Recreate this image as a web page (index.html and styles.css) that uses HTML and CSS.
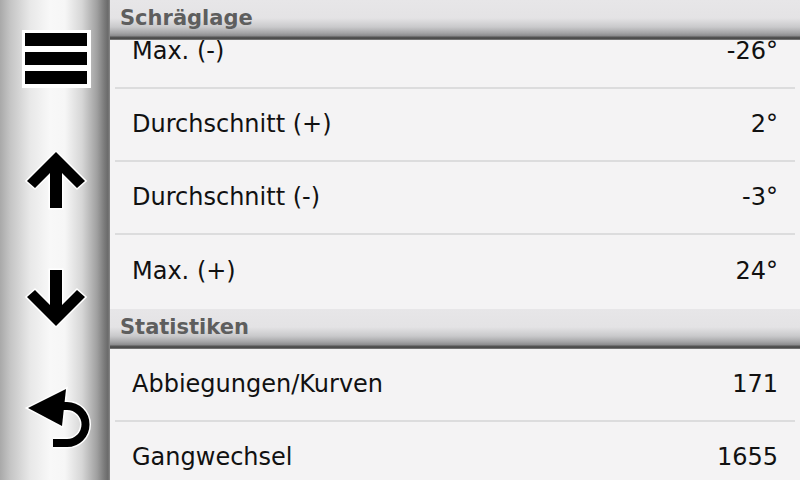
FILE: index.html
```html
<!DOCTYPE html>
<html lang="de">
  <head>
    <meta charset="UTF-8" />
    <meta name="viewport" content="width=device-width, initial-scale=1.0" />
    <title>Reisestatistik</title>

    <link rel="stylesheet" href="styles.css">
  </head>
  <body>
    <div class="screen">
      <div class="sidebar">
        <div class="side-btn" id="menu">
          <svg width="110" height="120" viewBox="0 0 110 120">
            <rect x="22" y="30" width="69" height="58" fill="#fff" />
            <rect x="25" y="33" width="62" height="13" fill="#000" />
            <rect x="25" y="52" width="62" height="13" fill="#000" />
            <rect x="25" y="71" width="62" height="13" fill="#000" />
          </svg>
        </div>

        <div class="side-btn" id="up">
          <svg width="110" height="120" viewBox="0 0 110 120">
            <polygon class="icon" points="56,32 85,61 77,68 62,53 62,88 50,88 50,53 35,68 27,61" />
          </svg>
        </div>

        <div class="side-btn" id="down">
          <svg width="110" height="120" viewBox="0 0 110 120">
            <polygon class="icon" points="50,30 62,30 62,65 77,50 85,57 56,86 27,57 35,50 50,65" />
          </svg>
        </div>

        <div class="side-btn" id="back">
          <svg width="110" height="120" viewBox="0 0 110 120">
            <path class="icon-line-bg" d="M 58 46 L 67 46 A 18.5 18.5 0 0 1 67 83 L 53 83" />
            <polygon class="icon" points="28,48 66,29 62,66" />
            <path class="icon-line" d="M 58 46 L 67 46 A 18.5 18.5 0 0 1 67 83 L 53 83" />
          </svg>
        </div>
      </div>

      <div class="list">
        <div class="group first">
          <div class="group-title overlay">Schräglage</div>
          <div class="row"><span>Max. (-)</span><span>-26°</span></div>
          <div class="row"><span>Durchschnitt (+)</span><span>2°</span></div>
          <div class="row"><span>Durchschnitt (-)</span><span>-3°</span></div>
          <div class="row last"><span>Max. (+)</span><span>24°</span></div>
        </div>

        <div class="group">
          <div class="group-title">Statistiken</div>
          <div class="row"><span>Abbiegungen/Kurven</span><span>171</span></div>
          <div class="row"><span>Gangwechsel</span><span>1655</span></div>
        </div>
      </div>
    </div>
  </body>
</html>
```

FILE: styles.css
```css
* {
  margin: 0;
  padding: 0;
  box-sizing: border-box;
}

body {
  width: 800px;
  height: 480px;
  overflow: hidden;
  font-family: "DejaVu Sans", "Liberation Sans", sans-serif;
  background-color: #f4f3f4;
}

.screen {
  display: flex;
  width: 800px;
  height: 480px;
}

.sidebar {
  width: 110px;
  height: 480px;
  display: flex;
  flex-direction: column;
  background: linear-gradient(to right, #a9a9a9 0, #c4c4c4 10px, #e8e8e8 30px, #f8f8f8 50px, #f6f6f6 65px, #d6d6d6 82px, #a0a0a0 97px, #7c7c7c 104px, #6a6a6a 108px, #8a8a8a 110px);
}

.side-btn {
  height: 120px;
}

.side-btn svg {
  display: block;
}

.icon {
  fill: #000;
  stroke: #fff;
  stroke-width: 3;
  paint-order: stroke;
  stroke-linejoin: miter;
}

.icon-line-bg {
  fill: none;
  stroke: #fff;
  stroke-width: 11;
}

.icon-line {
  fill: none;
  stroke: #000;
  stroke-width: 8;
}

.list {
  flex: 1;
  height: 480px;
  overflow: hidden;
  background-color: #f4f3f4;
}

.group {
  position: relative;
}

.group.first {
  padding-top: 16px;
}

.group-title {
  height: 40px;
  padding-left: 10px;
  line-height: 36px;
  font-size: 21px;
  font-weight: bold;
  color: #5e5e5e;
  background: linear-gradient(to bottom, #e7e6e8 0, #e4e3e5 18px, #c9c9cb 27px, #a4a4a6 33px, #8a8a8c 36px, #555 37px, #4a4a4a 39px, #9a9a9a 40px);
}

.group-title.overlay {
  position: absolute;
  top: 0;
  left: 0;
  right: 0;
  z-index: 1;
}

.row {
  height: 73px;
  margin: 0 5px;
  padding: 0 17px 2px 17px;
  display: flex;
  justify-content: space-between;
  align-items: center;
  font-size: 24px;
  color: #111;
  border-bottom: 2px solid #dcdcdd;
}

.row.last {
  height: 74px;
  border-bottom: none;
}
```
